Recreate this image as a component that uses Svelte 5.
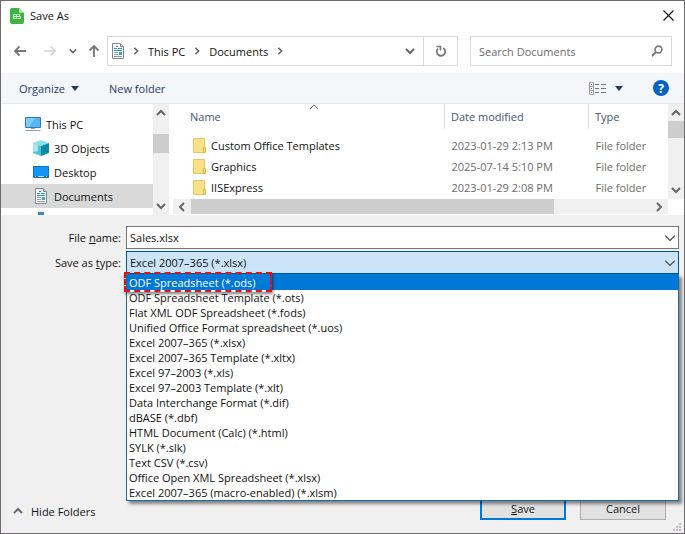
<script>
  const places = [
    { name: "This PC", icon: "pc", root: true },
    { name: "3D Objects", icon: "cube" },
    { name: "Desktop", icon: "desktop" },
    { name: "Documents", icon: "document" },
  ];

  const folders = [
    { name: "Custom Office Templates", modified: "2023-01-29 2:13 PM" },
    { name: "Graphics", modified: "2025-07-14 5:10 PM" },
    { name: "IISExpress", modified: "2023-01-29 2:08 PM" },
  ];

  const types = [
    "ODF Spreadsheet (*.ods)",
    "ODF Spreadsheet Template (*.ots)",
    "Flat XML ODF Spreadsheet (*.fods)",
    "Unified Office Format spreadsheet (*.uos)",
    "Excel 2007–365 (*.xlsx)",
    "Excel 2007–365 Template (*.xltx)",
    "Excel 97–2003 (*.xls)",
    "Excel 97–2003 Template (*.xlt)",
    "Data Interchange Format (*.dif)",
    "dBASE (*.dbf)",
    "HTML Document (Calc) (*.html)",
    "SYLK (*.slk)",
    "Text CSV (*.csv)",
    "Office Open XML Spreadsheet (*.xlsx)",
    "Excel 2007–365 (macro-enabled) (*.xlsm)",
  ];

  let place = $state("Documents");
  let fileName = $state("Sales.xlsx");
  let fileType = $state("Excel 2007–365 (*.xlsx)");
  let active = $state(0);
  let open = $state(true);

  function choose(type) {
    fileType = type;
    open = false;
  }
</script>

{#snippet chevron(dir, size = 10)}
  <svg class="chevron {dir}" width={size} height={size} viewBox="0 0 10 10" aria-hidden="true">
    <path d="M1 3l4 4 4-4" />
  </svg>
{/snippet}

{#snippet documentIcon()}
  <svg class="document" width="12" height="16" viewBox="2 0 12 16" aria-hidden="true">
    <path d="M2.500.5h8l3 3v12h-11z" fill="#fff" stroke="#7d8890" />
    <path d="M10.500.5v3h3" fill="#dfe3e6" stroke="#7d8890" />
    <path d="M4 5.500h3M8 5.500h4M4 7.500h8" stroke="#2492d8" stroke-width="1.200" />
    <path d="M6 3.500h2" stroke="#2492d8" />
    <path d="M4 9.500h4M4 11.500h4M4 13.500h8" stroke="#8d9aa3" />
    <path d="M9 9h3v3H9z" fill="#3fa6b8" />
  </svg>
{/snippet}

{#snippet placeIcon(kind)}
  {#if kind === "pc"}
    <svg width="16" height="16" viewBox="0 0 16 16" aria-hidden="true">
      <path d="M.5 1.500h15v10H.5z" fill="#58b6f5" stroke="#3579a8" />
      <path d="M1 2h9L4 11H1z" fill="#7fcbfb" />
      <path d="M6 12h4v1H6z" fill="#8aa1b1" />
      <path d="M.5 14.500h15" stroke="#8aa1b1" />
    </svg>
  {:else if kind === "cube"}
    <svg width="16" height="16" viewBox="0 0 16 16" aria-hidden="true">
      <path d="M0 3l8-3 8 3-8 3z" fill="#8be0ea" />
      <path d="M0 3l8 3v10l-8-3z" fill="#4cc3d4" />
      <path d="M16 3L8 6v10l8-3z" fill="#0d8ba6" />
      <path d="M0 3l5 2v6l-5 1z" fill="#a9e6ec" />
    </svg>
  {:else if kind === "desktop"}
    <svg width="16" height="16" viewBox="0 0 16 16" aria-hidden="true">
      <path d="M.5 2.500h15v11H.5z" fill="#1195f5" stroke="#0c6fc0" />
      <path d="M1 12.500h14" stroke="#0a5fb0" />
      <path d="M2 12.500h1M5 12.500h6M13 12.500h1" stroke="#bfe2ff" />
    </svg>
  {:else}
    {@render documentIcon()}
  {/if}
{/snippet}

<div class="dialog" role="dialog" aria-label="Save As">
  <header class="title-bar">
    <svg width="14" height="16" viewBox="0 0 14 16" aria-hidden="true">
      <path d="M2 0h7l5 5v9a2 2 0 0 1-2 2H2a2 2 0 0 1-2-2V2a2 2 0 0 1 2-2z" fill="#3cb43f" />
      <path d="M9 0l5 5H10a1 1 0 0 1-1-1z" fill="#a9e3a3" />
      <path d="M3.500 6.500h3v4h-3zM3.500 8.500h7M7.500 6.500h2v2M7.500 10.500h3v-2" fill="none" stroke="#d9f3d6" />
    </svg>
    <h1>Save As</h1>
    <button class="close" type="button" aria-label="Close">
      <svg width="11" height="11" viewBox="0 0 11 11" aria-hidden="true">
        <path d="M.5.5l10 10M10.500.5l-10 10" fill="none" stroke="#111" stroke-width="1.100" />
      </svg>
    </button>
  </header>

  <div class="nav-bar">
    <div class="history">
      <button type="button" aria-label="Back">
        <svg width="14" height="12" viewBox="0 0 14 12" aria-hidden="true">
          <path d="M13 6H2M6.500 1.500L2 6l4.500 4.500" fill="none" stroke="#777" stroke-width="1.800" />
        </svg>
      </button>
      <button type="button" aria-label="Forward" disabled>
        <svg width="14" height="12" viewBox="0 0 14 12" aria-hidden="true">
          <path d="M1 6h11M7.500 1.500L12 6l-4.500 4.500" fill="none" stroke="#d4d4d4" stroke-width="1.600" />
        </svg>
      </button>
      <button type="button" aria-label="Recent locations">
        {@render chevron("down", 8)}
      </button>
      <button type="button" aria-label="Up">
        <svg width="12" height="14" viewBox="0 0 12 14" aria-hidden="true">
          <path d="M6 13V2M1.500 6.500L6 2l4.500 4.500" fill="none" stroke="#777" stroke-width="1.800" />
        </svg>
      </button>
    </div>
    <div class="address">
      {@render documentIcon()}
      {@render chevron("right", 8)}
      <button type="button">This PC</button>
      {@render chevron("right", 8)}
      <button type="button">Documents</button>
      {@render chevron("right", 8)}
      <button class="previous" type="button" aria-label="Previous locations">
        {@render chevron("down")}
      </button>
      <button class="refresh" type="button" aria-label="Refresh">
        <svg width="12" height="12" viewBox="0 0 12 12" aria-hidden="true">
          <path d="M8.200 3A4.200 4.200 0 1 1 3 3.600" fill="none" stroke="#777" stroke-width="1.800" />
          <path d="M1.500 1.500h4v4" fill="none" stroke="#777" stroke-width="1.600" />
        </svg>
      </button>
    </div>
    <div class="search">
      <input type="search" placeholder="Search Documents" aria-label="Search Documents" />
      <svg width="12" height="12" viewBox="0 0 12 12" aria-hidden="true">
        <circle cx="7.500" cy="4.500" r="3.400" fill="none" stroke="#777" stroke-width="1.600" />
        <path d="M5 7L1 11" stroke="#777" stroke-width="1.800" />
      </svg>
    </div>
  </div>

  <div class="toolbar">
    <button type="button">
      Organize
      <svg width="8" height="5" viewBox="0 0 8 5" aria-hidden="true"><path d="M0 0h8L4 5z" fill="#1d3a66" /></svg>
    </button>
    <button type="button">New folder</button>
    <button class="view" type="button" aria-label="Change your view">
      <svg width="17" height="13" viewBox="0 0 17 13" aria-hidden="true">
        <path d="M.5.5h4v12h-4zM.5 4.500h4M.5 8.500h4" fill="#fff" stroke="#9a9a9a" />
        <path d="M2 2.500h1M2 6.500h1M2 10.500h1" stroke="#b03a3a" />
        <path d="M6 2.500h4M12 2.500h5M6 6.500h4M12 6.500h5M6 10.500h4M12 10.500h5" stroke="#777" />
      </svg>
      <svg width="8" height="5" viewBox="0 0 8 5" aria-hidden="true"><path d="M0 0h8L4 5z" fill="#1d3a66" /></svg>
    </button>
    <button class="help" type="button" aria-label="Help">?</button>
  </div>

  <div class="panes">
    <nav class="places">
      {#each places as item}
        <button
          type="button"
          class:root={item.root}
          class:selected={item.name === place}
          onclick={() => (place = item.name)}
        >
          {@render placeIcon(item.icon)}
          <span>{item.name}</span>
        </button>
      {/each}
      <div class="next-place"></div>
    </nav>
    <div class="scrollbar side-scroll">
      {@render chevron("up")}
      <div class="thumb"></div>
      {@render chevron("down")}
    </div>

    <div class="files">
      <div class="file-area">
        <table>
          <thead>
            <tr>
              <th class="name">Name<span class="sorted">{@render chevron("up")}</span></th>
              <th class="date">Date modified</th>
              <th class="type">Type</th>
            </tr>
          </thead>
          <tbody>
            {#each folders as folder}
              <tr>
                <td class="name">
                  <div class="folder">
                    <svg width="13" height="15" viewBox="0 0 13 15" aria-hidden="true">
                      <path d="M.5.5h11v14H.5z" fill="#fbe08a" stroke="#e8c65e" />
                      <path d="M10.500 9.500h2v5h-2z" fill="#fbe08a" stroke="#dfb53c" />
                    </svg>
                    {folder.name}
                  </div>
                </td>
                <td>{folder.modified}</td>
                <td>File folder</td>
              </tr>
            {/each}
          </tbody>
        </table>
        <div class="scrollbar file-scroll">
          {@render chevron("up")}
          <div class="thumb"></div>
          {@render chevron("down")}
        </div>
      </div>
      <div class="h-scroll">
        {@render chevron("left")}
        <div class="track"><div class="thumb"></div></div>
        {@render chevron("right")}
      </div>
    </div>
  </div>

  <div class="form">
    <label for="file-name">File <u>n</u>ame:</label>
    <div class="field">
      <input id="file-name" type="text" bind:value={fileName} />
      {@render chevron("down thin", 12)}
    </div>
    <label for="file-type">Save as <u>t</u>ype:</label>
    <div class="field">
      <select id="file-type" bind:value={fileType}>
        {#each types as type}
          <option>{type}</option>
        {/each}
      </select>
      {@render chevron("down thin", 12)}
      {#if open}
        <div class="options" role="listbox" aria-label="Save as type">
          {#each types as type, i}
            <button
              type="button"
              role="option"
              aria-selected={i === active}
              onmouseenter={() => (active = i)}
              onclick={() => choose(type)}>{type}</button
            >
          {/each}
          <div class="highlight"></div>
        </div>
      {/if}
    </div>
  </div>

  <footer>
    <button class="hide" type="button">
      {@render chevron("up")}
      Hide Folders
    </button>
    <button class="btn primary" type="button"><u>S</u>ave</button>
    <button class="btn" type="button">Cancel</button>
  </footer>
  <svg class="grip" width="8" height="8" viewBox="0 0 8 8" aria-hidden="true">
    <path d="M6 0h2v2H6zM3 3h2v2H3zM6 3h2v2H6zM0 6h2v2H0zM3 6h2v2H3zM6 6h2v2H6z" fill="#bcbcbc" />
  </svg>
</div>

<style>
  :global(body) {
    margin: 0;
  }

  .dialog {
    position: relative;
    box-sizing: border-box;
    min-height: 100vh;
    display: flex;
    flex-direction: column;
    border: 1px solid #6c6a6c;
    background: #f0f0f0;
    color: #111;
    font-family: "Open Sans", "Noto Sans", sans-serif;
    font-size: 11px;
    line-height: 15px;
  }

  button,
  input,
  select {
    font: inherit;
    color: inherit;
    margin: 0;
    padding: 0;
    border: 0;
    border-radius: 0;
    background: none;
  }

  svg {
    display: block;
    flex: none;
  }

  .chevron {
    fill: none;
    stroke: #666;
    stroke-width: 2;
  }

  .thin {
    stroke: #444;
    stroke-width: 1;
  }

  .up {
    transform: rotate(180deg);
  }

  .right {
    transform: rotate(-90deg);
  }

  .left {
    transform: rotate(90deg);
  }

  .title-bar {
    display: flex;
    align-items: center;
    gap: 6px;
    height: 29px;
    padding: 0 10px 0 9px;
    background: #fff;
  }

  h1 {
    margin: 0;
    font-size: 11px;
    font-weight: 400;
  }

  .close {
    margin-left: auto;
  }

  .nav-bar {
    display: flex;
    padding: 6px 12px 7px 4px;
    background: #fff;
  }

  .history {
    display: grid;
    grid-template-columns: 30px 30px 16px 26px;
  }

  .history button {
    display: grid;
    place-items: center;
  }

  .address,
  .search {
    box-sizing: border-box;
    height: 30px;
    display: flex;
    align-items: center;
    border: 1px solid #d9d9d9;
  }

  .address {
    flex: 1;
    gap: 8px;
    padding-left: 4px;
  }

  .previous {
    margin-left: auto;
  }

  .refresh {
    width: 34px;
    height: 28px;
    display: grid;
    place-items: center;
    border-left: 1px solid #d9d9d9;
  }

  .search {
    width: 202px;
    margin-left: 12px;
    padding: 0 8px;
  }

  .search input {
    flex: 1;
    min-width: 0;
    outline: 0;
  }

  .search input::placeholder {
    color: #6d6d6d;
    opacity: 1;
  }

  .toolbar {
    display: flex;
    align-items: center;
    gap: 30px;
    height: 30px;
    padding: 0 15px 0 18px;
    background: #f4f6f9;
    border-bottom: 1px solid #e6e8eb;
    color: #1d3a66;
  }

  .toolbar button {
    display: flex;
    align-items: center;
    gap: 6px;
  }

  .toolbar .view {
    margin-left: auto;
    gap: 9px;
  }

  .toolbar .help {
    width: 16px;
    height: 16px;
    justify-content: center;
    border-radius: 8px;
    background: #0763c0;
    color: #fff;
    font-size: 12px;
    font-weight: 700;
  }

  .panes {
    display: flex;
    height: 111px;
    background: #fff;
  }

  .places {
    box-sizing: border-box;
    width: 152px;
    padding-top: 8px;
    overflow: hidden;
  }

  .places button {
    width: 100%;
    height: 24px;
    padding-left: 32px;
    display: flex;
    align-items: center;
    gap: 5px;
  }

  .places .root {
    padding-left: 24px;
  }

  .places .selected {
    background: #d9d9d9;
  }

  .places :global(.document) {
    margin: 0 2px;
  }

  .next-place {
    width: 6px;
    height: 3px;
    margin: 4px 0 0 37px;
    background: #3c86c8;
  }

  .scrollbar {
    width: 16px;
    flex: none;
    display: flex;
    flex-direction: column;
    align-items: center;
    justify-content: space-between;
    box-sizing: border-box;
    padding: 4px 0;
    background: #f0f0f0;
  }

  .scrollbar .thumb {
    width: 100%;
    background: #cdcdcd;
  }

  .side-scroll .thumb {
    height: 19px;
    margin-bottom: 32px;
  }

  .file-scroll .thumb {
    height: 17px;
    margin-bottom: 44px;
  }

  .files {
    flex: 1;
    min-width: 0;
    margin-left: 4px;
  }

  .file-area {
    display: flex;
    height: 95px;
  }

  table {
    flex: 1;
    align-self: flex-start;
    table-layout: fixed;
    border-collapse: collapse;
    color: #6d6d6d;
  }

  th {
    position: relative;
    height: 25px;
    padding: 0 0 0 6px;
    border-left: 1px solid #e2e2e2;
    color: #44546f;
    font-weight: 400;
    text-align: left;
  }

  th.name {
    padding-left: 17px;
    border-left: 0;
  }

  .date {
    width: 137px;
  }

  .type {
    width: 73px;
  }

  /* sort arrow hugs the top edge of the header cell */
  .sorted {
    position: absolute;
    top: -2px;
    left: 50%;
  }

  .sorted .chevron {
    stroke-width: 1;
  }

  td {
    height: 21px;
    padding: 0 0 0 7px;
    white-space: nowrap;
  }

  tbody tr:first-child td {
    padding-top: 6px;
  }

  td.name {
    padding-left: 20px;
    color: #111;
  }

  .folder {
    display: flex;
    align-items: center;
    gap: 5px;
  }

  .h-scroll {
    display: flex;
    align-items: center;
    gap: 4px;
    height: 15px;
    margin-right: 16px;
    padding: 0 4px;
    background: #f0f0f0;
  }

  .track {
    flex: 1;
    height: 100%;
  }

  .track .thumb {
    width: 79%;
    height: 100%;
    background: #cdcdcd;
  }

  .form {
    display: grid;
    grid-template-columns: 120px 1fr;
    column-gap: 5px;
    row-gap: 2px;
    align-items: center;
    padding: 11px 5px 0 0;
  }

  label {
    text-align: right;
  }

  .field {
    position: relative;
  }

  .field input,
  .field select {
    display: block;
    box-sizing: border-box;
    width: 100%;
    height: 23px;
    padding: 0 24px 0 3px;
    border: 1px solid #767676;
    background: #fff;
    appearance: none;
    outline: 0;
  }

  .field select {
    border-color: #00568f;
    background: #cce4f7;
  }

  .field > :global(.chevron) {
    position: absolute;
    top: 6px;
    right: 3px;
  }

  .options {
    position: absolute;
    top: 100%;
    left: 0;
    right: 0;
    z-index: 1;
    border: 1px solid #1a6ca8;
    border-top-color: #0078d7;
    background: #fff;
    box-shadow: 3px 3px 3px rgba(0, 0, 0, 0.45);
  }

  .options button {
    display: block;
    width: 100%;
    height: 15px;
    padding-left: 2px;
    text-align: left;
    white-space: nowrap;
  }

  .options [aria-selected="true"] {
    background: #0078d7;
    color: #fff;
  }

  .highlight {
    position: absolute;
    top: -3px;
    left: -3px;
    width: 144px;
    height: 16px;
    border: 2px dashed #e01212;
    box-shadow: 1px 2px 3px rgba(0, 0, 0, 0.5);
    pointer-events: none;
  }

  footer {
    display: flex;
    align-items: center;
    gap: 14px;
    margin-top: auto;
    padding: 0 18px 13px 12px;
  }

  .hide {
    display: flex;
    align-items: center;
    gap: 8px;
    margin: 6px auto 0 0;
  }

  .btn {
    box-sizing: border-box;
    width: 86px;
    height: 24px;
    border: 1px solid #adadad;
    background: #e1e1e1;
  }

  .primary {
    border: 2px solid #0078d7;
  }

  .grip {
    position: absolute;
    right: 3px;
    bottom: 2px;
  }
</style>
